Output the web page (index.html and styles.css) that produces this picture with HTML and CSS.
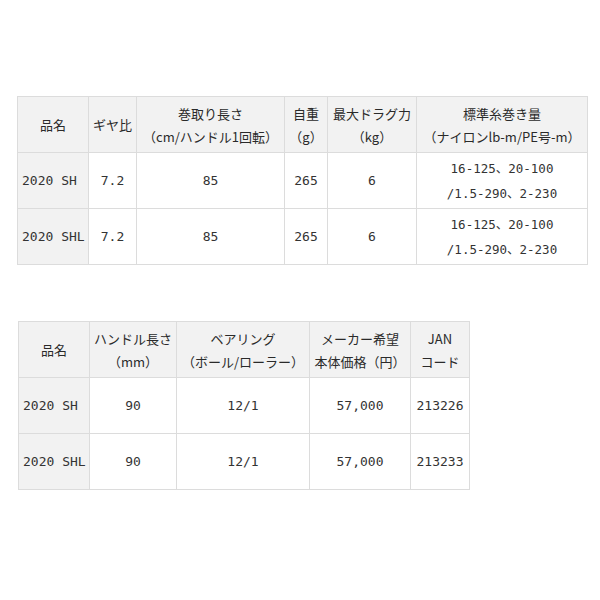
FILE: index.html
```html
<!DOCTYPE html>
<html lang="ja">
<head>
<meta charset="utf-8">
<link rel="stylesheet" href="styles.css">
</head>
<body>
<div class="page">
<table class="spec spec1">
  <colgroup>
    <col class="c1-1"><col class="c1-2"><col class="c1-3"><col class="c1-4"><col class="c1-5"><col class="c1-6">
  </colgroup>
  <tr class="head">
    <th>品名</th>
    <th>ギヤ比</th>
    <th>巻取り長さ<br>（cm/ハンドル1回転）</th>
    <th>自重<br>（g）</th>
    <th>最大ドラグ力<br>（kg）</th>
    <th>標準糸巻き量<br>（ナイロンlb-m/PE号-m）</th>
  </tr>
  <tr>
    <th class="name">2020 SH</th>
    <td>7.2</td>
    <td>85</td>
    <td>265</td>
    <td>6</td>
    <td class="multi">16-125、20-100<br>/1.5-290、2-230</td>
  </tr>
  <tr>
    <th class="name">2020 SHL</th>
    <td>7.2</td>
    <td>85</td>
    <td>265</td>
    <td>6</td>
    <td class="multi">16-125、20-100<br>/1.5-290、2-230</td>
  </tr>
</table>

<table class="spec spec2">
  <colgroup>
    <col class="c2-1"><col class="c2-2"><col class="c2-3"><col class="c2-4"><col class="c2-5">
  </colgroup>
  <tr class="head">
    <th>品名</th>
    <th>ハンドル長さ<br>（mm）</th>
    <th>ベアリング<br>（ボール/ローラー）</th>
    <th>メーカー希望<br>本体価格（円）</th>
    <th>JAN<br>コード</th>
  </tr>
  <tr>
    <th class="name">2020 SH</th>
    <td>90</td>
    <td>12/1</td>
    <td>57,000</td>
    <td>213226</td>
  </tr>
  <tr>
    <th class="name">2020 SHL</th>
    <td>90</td>
    <td>12/1</td>
    <td>57,000</td>
    <td>213233</td>
  </tr>
</table>
</div>
</body>
</html>
```
FILE: styles.css
```css
html, body {
  margin: 0;
  padding: 0;
  background: #fff;
}
.page {
  padding: 96px 0 0 17px;
  display: flex;
  flex-direction: column;
  align-items: flex-start;
  gap: 56px;
}
.spec {
  border-collapse: collapse;
  table-layout: fixed;
  font-family: "Noto Sans CJK JP", sans-serif;
  font-size: 13px;
  line-height: 24px;
  color: #2a2a2a;
}
.spec th, .spec td {
  border: 1px solid #dcdcdc;
  padding: 0;
  height: 55px;
  text-align: center;
  vertical-align: middle;
  font-weight: normal;
  white-space: nowrap;
  overflow: hidden;
}
.spec td, .spec th.name {
  font-family: "DejaVu Sans Mono", "Noto Sans CJK JP", monospace;
  font-size: 13px;
  color: #333;
}
.spec td.multi {
  font-size: 12.5px;
  line-height: 25px;
}
.spec .head th {
  background: #f2f2f2;
  line-height: 23px;
}
.spec th.name {
  background: #f2f2f2;
  text-align: left;
  padding-left: 4px;
}
.spec1 { width: 570px; }
.c1-1 { width: 71px; }
.c1-2 { width: 48px; }
.c1-3 { width: 148px; }
.c1-4 { width: 43px; }
.c1-5 { width: 89px; }
.c1-6 { width: 171px; }
.spec2 { width: 451px; margin-left: 1px; }
.c2-1 { width: 71px; }
.c2-2 { width: 87px; }
.c2-3 { width: 133px; }
.c2-4 { width: 101px; }
.c2-5 { width: 59px; }
```
